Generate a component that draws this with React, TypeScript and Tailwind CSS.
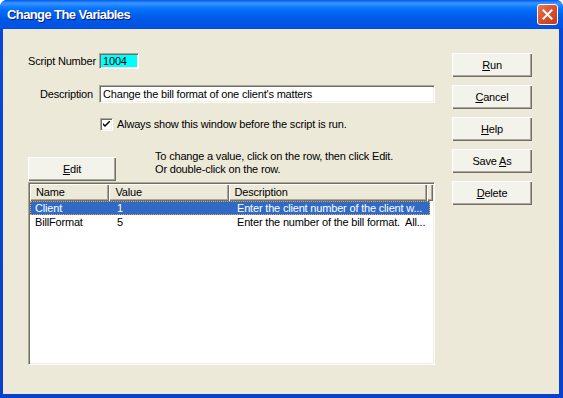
import React from "react";

const font = { fontFamily: '"Liberation Sans", Arial, sans-serif' };

function Btn({ children, className = "" }: { children: React.ReactNode; className?: string }) {
  return (
    <div
      className={`flex items-center justify-center bg-[#F3F2EB] text-[11px] text-black shadow-[inset_1px_1px_0_#ffffff,inset_-1px_-1px_0_#716F64,inset_-2px_-2px_0_#ACA899] ${className}`}
    >
      {children}
    </div>
  );
}

const sunken =
  "border border-t-[#ACA899] border-l-[#ACA899] border-b-white border-r-white shadow-[inset_1px_1px_0_#716F64,inset_-1px_-1px_0_#F1EFE2]";

const headerCell =
  "h-[17px] flex items-center pl-[6px] bg-[#ECE9D8] shadow-[inset_1px_1px_0_#ffffff,inset_-1px_-1px_0_#716F64,inset_-2px_-2px_0_#ACA899] overflow-hidden whitespace-nowrap";

export default function App() {
  return (
    <div className="w-[563px] h-[398px] bg-white" style={font}>
      <div className="w-full h-full flex flex-col rounded-t-[7px] overflow-hidden bg-[linear-gradient(to_bottom,#0848D8,#0A40CC)]">
        {/* Title bar */}
        <div className="h-[29px] shrink-0 flex items-center pl-[7px] pr-[5px] bg-[linear-gradient(to_bottom,#0058EE_0%,#3A93FF_10%,#288EFF_16%,#127DFF_24%,#036FFC_34%,#0262EE_50%,#0057E5_70%,#0054E3_86%,#0055EB_94%,#0048D6_100%)]">
          <span className="text-white font-bold text-[13px] tracking-[-0.6px] [text-shadow:1px_1px_0_#0A1883]">
            Change The Variables
          </span>
          <div className="ml-auto w-[21px] h-[21px] rounded-[3px] border border-white bg-[linear-gradient(to_bottom_right,#E97A58,#D9502C_50%,#C13A18)] flex items-center justify-center">
            <svg width="11" height="11" viewBox="0 0 11 11">
              <path d="M1.5 1.5 L9.5 9.5 M9.5 1.5 L1.5 9.5" stroke="white" strokeWidth="2" strokeLinecap="square" />
            </svg>
          </div>
        </div>

        {/* Content */}
        <div className="flex-1 ml-[3px] mr-[4px] mb-[4px] bg-[#ECE9D8] flex text-[11px] tracking-[-0.18px] text-black">
          {/* Left column */}
          <div className="pl-[25px] w-[432px] pt-[24px] flex flex-col">
            <div className="flex items-center h-[16px]">
              <div className="w-[65px] text-right whitespace-nowrap">Script Number</div>
              <div className={`ml-[6px] w-[40px] h-[16px] bg-[#00FFFF] flex items-center pl-[3px] ${sunken}`}>1004</div>
            </div>
            <div className="flex items-center h-[18px] mt-[16px]">
              <div className="w-[65px] text-right whitespace-nowrap">Description</div>
              <div className={`ml-[6px] flex-1 h-[18px] bg-white flex items-center pl-[3px] ${sunken}`}>
                Change the bill format of one client's matters
              </div>
            </div>
            <div className="flex items-center h-[13px] mt-[15px] pl-[72px]">
              <div className={`w-[13px] h-[13px] bg-white flex items-center justify-center ${sunken}`}>
                <svg width="7" height="7" viewBox="0 0 7 7">
                  <path d="M0 2 L0 4 L2 6 L7 1 L7 -1 L2 4 Z" fill="black" />
                </svg>
              </div>
              <span className="ml-[4px] whitespace-nowrap">Always show this window before the script is run.</span>
            </div>
            <div className="flex mt-[19px]">
              <Btn className="mt-[7px] w-[88px] h-[24px]">
                <span><u>E</u>dit</span>
              </Btn>
              <div className="ml-[39px] leading-[13px] whitespace-nowrap">
                <div>To change a value, click on the row, then click Edit.</div>
                <div>Or double-click on the row.</div>
              </div>
            </div>
            <div className={`mt-[1px] w-[407px] h-[183px] bg-white flex flex-col ${sunken} p-[1px]`}>
              <div className="flex">
                <div className={`${headerCell} w-[80px]`}>Name</div>
                <div className={`${headerCell} w-[120px]`}>Value</div>
                <div className={`${headerCell} w-[200px]`}>Description</div>
                <div className={`${headerCell} flex-1 pl-0`}></div>
              </div>
              <div className="flex w-[400px] h-[14px] leading-[14px] bg-[#316AC5] text-white outline outline-1 outline-dotted outline-[#E8A33B] -outline-offset-1">
                <div className="w-[80px] pl-[5px] whitespace-nowrap overflow-hidden">Client</div>
                <div className="w-[120px] pl-[7px] whitespace-nowrap overflow-hidden">1</div>
                <div className="w-[200px] pl-[7px] whitespace-nowrap">Enter the client number of the client w...</div>
              </div>
              <div className="flex w-[400px] h-[14px] leading-[14px]">
                <div className="w-[80px] pl-[5px] whitespace-nowrap overflow-hidden">BillFormat</div>
                <div className="w-[120px] pl-[7px] whitespace-nowrap overflow-hidden">5</div>
                <div className="w-[200px] pl-[7px] whitespace-nowrap">Enter the number of the bill format.&nbsp; All...</div>
              </div>
            </div>
          </div>

          {/* Right buttons */}
          <div className="ml-[17px] mt-[24px] flex flex-col gap-[8px]">
            <Btn className="w-[80px] h-[24px]"><span><u>R</u>un</span></Btn>
            <Btn className="w-[80px] h-[24px]"><span><u>C</u>ancel</span></Btn>
            <Btn className="w-[80px] h-[24px]"><span><u>H</u>elp</span></Btn>
            <Btn className="w-[80px] h-[24px]"><span>Save <u>A</u>s</span></Btn>
            <Btn className="w-[80px] h-[24px]"><span><u>D</u>elete</span></Btn>
          </div>
        </div>
      </div>
    </div>
  );
}
